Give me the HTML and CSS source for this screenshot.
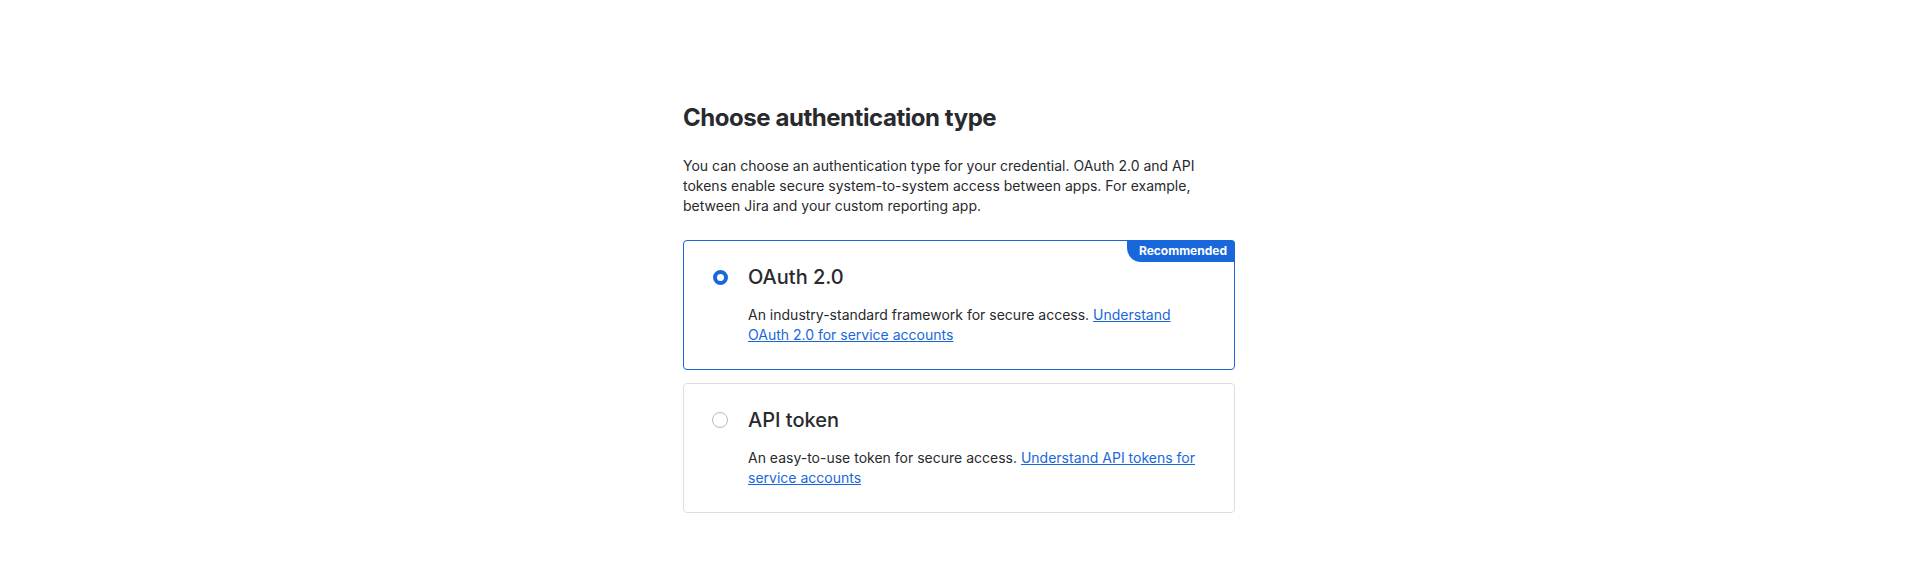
FILE: index.html
```html
<!DOCTYPE html>
<html lang="en">
<head>
<meta charset="utf-8">
<title>Choose authentication type</title>
<link rel="stylesheet" href="styles.css">
</head>
<body>
<main class="page">
  <section class="panel">
    <h1 class="title">Choose authentication type</h1>
    <p class="intro">You can choose an authentication type for your credential. OAuth 2.0 and API tokens enable secure system-to-system access between apps. For example, between Jira and your custom reporting app.</p>
    <div class="options">
      <div class="option option--selected">
        <span class="badge">Recommended</span>
        <span class="radio-col"><span class="radio radio--on"></span></span>
        <div class="option-body">
          <div class="option-title">OAuth 2.0</div>
          <div class="option-desc">An industry-standard framework for secure access. <a class="link" href="#">Understand OAuth 2.0 for service accounts</a></div>
        </div>
      </div>
      <div class="option">
        <span class="radio-col"><span class="radio"></span></span>
        <div class="option-body">
          <div class="option-title">API token</div>
          <div class="option-desc">An easy-to-use token for secure access. <a class="link" href="#">Understand API tokens for service accounts</a></div>
        </div>
      </div>
    </div>
  </section>
</main>
</body>
</html>
```
FILE: styles.css
```css
html, body {
  margin: 0;
  padding: 0;
  background: #ffffff;
}
body {
  font-family: Inter, "Noto Sans", "Liberation Sans", sans-serif;
  color: #292a2e;
}
.page {
  display: flex;
  justify-content: center;
  padding-top: 104px;
  padding-left: 4px;
}
.panel {
  width: 552px;
  display: flex;
  flex-direction: column;
}
.title {
  margin: 0;
  font-size: 24px;
  line-height: 28px;
  font-weight: 700;
  color: #292a2e;
  letter-spacing: -0.45px;
}
.intro {
  margin: 24px 0 0;
  font-size: 14px;
  line-height: 20px;
  font-weight: 400;
}
.options {
  margin-top: 24px;
  display: flex;
  flex-direction: column;
  gap: 13px;
}
.option {
  position: relative;
  display: flex;
  gap: 16px;
  padding: 24px;
  border: 1px solid #dddee1;
  border-radius: 4px;
  cursor: pointer;
}
.option--selected {
  border-color: #1868db;
}
.badge {
  position: absolute;
  top: -1px;
  right: -1px;
  background: #1868db;
  color: #ffffff;
  font-size: 12px;
  line-height: 22px;
  font-weight: 700;
  padding: 0 8px 0 12px;
  border-radius: 0 4px 0 14px;
}
.radio-col {
  width: 24px;
  height: 24px;
  display: flex;
  align-items: center;
  justify-content: center;
  flex-shrink: 0;
}
.radio {
  width: 16px;
  height: 16px;
  box-sizing: border-box;
  border-radius: 50%;
  border: 1px solid #b7b9be;
  background: #ffffff;
}
.radio--on {
  width: 15px;
  height: 15px;
  border: 4px solid #1868db;
}
.option-body {
  display: flex;
  flex-direction: column;
  gap: 16px;
  flex: 1;
}
.option-title {
  font-size: 20px;
  line-height: 24px;
  font-weight: 500;
}
.option-desc {
  font-size: 14px;
  line-height: 20px;
}
.link {
  color: #1868db;
  text-decoration: underline;
}
```
